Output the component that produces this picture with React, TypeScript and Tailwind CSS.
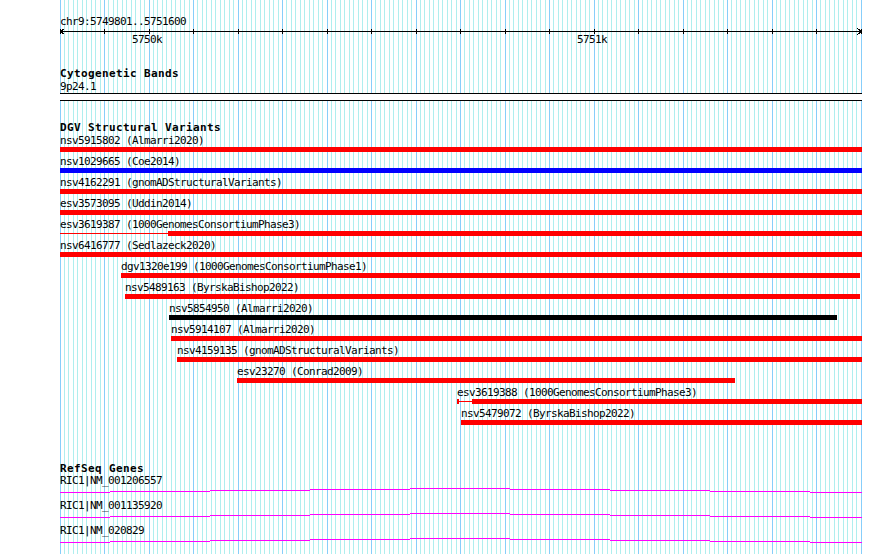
type Variant = {
  label: string;
  x: number;
  end: number;
  color: string;
  thick?: number;
  tick?: boolean;
};

const variants: Variant[] = [
  { label: "nsv5915802 (Almarri2020)", x: 60, end: 862, color: "#ff0000" },
  { label: "nsv1029665 (Coe2014)", x: 60, end: 862, color: "#0000ff" },
  { label: "nsv4162291 (gnomADStructuralVariants)", x: 60, end: 862, color: "#ff0000" },
  { label: "esv3573095 (Uddin2014)", x: 60, end: 862, color: "#ff0000" },
  { label: "esv3619387 (1000GenomesConsortiumPhase3)", x: 60, thick: 168, end: 862, color: "#ff0000" },
  { label: "nsv6416777 (Sedlazeck2020)", x: 60, end: 862, color: "#ff0000" },
  { label: "dgv1320e199 (1000GenomesConsortiumPhase1)", x: 121, end: 860, color: "#ff0000" },
  { label: "nsv5489163 (ByrskaBishop2022)", x: 125, end: 860, color: "#ff0000" },
  { label: "nsv5854950 (Almarri2020)", x: 169, end: 837, color: "#000000" },
  { label: "nsv5914107 (Almarri2020)", x: 171, end: 862, color: "#ff0000" },
  { label: "nsv4159135 (gnomADStructuralVariants)", x: 177, end: 862, color: "#ff0000" },
  { label: "esv23270 (Conrad2009)", x: 237, end: 735, color: "#ff0000" },
  { label: "esv3619388 (1000GenomesConsortiumPhase3)", x: 457, thick: 472, end: 862, color: "#ff0000", tick: true },
  { label: "nsv5479072 (ByrskaBishop2022)", x: 461, end: 862, color: "#ff0000" },
];

const genes = ["RIC1|NM_001206557", "RIC1|NM_001135920", "RIC1|NM_020829"];

// intron "hat" drawn as 1px steps, offsets relative to x=60
const hatSteps = [
  { x: 0, w: 50, y: 5 },
  { x: 50, w: 100, y: 4 },
  { x: 150, w: 100, y: 3 },
  { x: 250, w: 100, y: 2 },
  { x: 350, w: 100, y: 1 },
  { x: 450, w: 100, y: 2 },
  { x: 550, w: 100, y: 3 },
  { x: 650, w: 100, y: 4 },
  { x: 750, w: 52, y: 5 },
];

const gridLines = Array.from({ length: 181 }, (_, i) => ({
  x: Math.floor(60 + i * 4.45),
  major: i % 10 === 0,
}));

const mono = "font-['DejaVu_Sans_Mono',monospace] text-[11px] tracking-[-0.62px] leading-[13px] text-black whitespace-nowrap";
const bold = "font-['DejaVu_Sans_Mono',monospace] text-[11px] font-bold tracking-[0.38px] text-black whitespace-nowrap";

function Grid() {
  return (
    <svg className="absolute inset-0" width={890} height={554} shapeRendering="crispEdges">
      {gridLines
        .filter((g) => !g.major)
        .map((g) => (
          <rect key={g.x} x={g.x} y={0} width={1} height={554} fill="#afeeee" />
        ))}
      {gridLines
        .filter((g) => g.major)
        .map((g) => (
          <rect key={g.x} x={g.x} y={0} width={1} height={554} fill="#87cefa" />
        ))}
    </svg>
  );
}

function Ruler() {
  const ticks = gridLines.filter((g) => g.major);
  return (
    <div className="relative h-[20px]">
      <svg className="absolute inset-0" width={890} height={20} shapeRendering="crispEdges">
        <rect x={60} y={3} width={802} height={1} fill="#000" />
        {ticks.map((t) => (
          <rect key={t.x} x={t.x} y={1} width={1} height={5} fill="#000" />
        ))}
        <path d="M64.5 0.5 L60.5 3.5 L64.5 6.5" stroke="#000" fill="none" />
        <path d="M857.5 0.5 L861.5 3.5 L857.5 6.5" stroke="#000" fill="none" />
      </svg>
      <div className={`absolute top-[5px] left-[132px] ${mono}`}>5750k</div>
      <div className={`absolute top-[5px] left-[577px] ${mono}`}>5751k</div>
    </div>
  );
}

function VariantRow({ v }: { v: Variant }) {
  const thinEnd = v.thick ?? v.x;
  return (
    <div className="h-[21px]">
      <div className={mono} style={{ marginLeft: v.x }}>
        {v.label}
      </div>
      <div className="flex h-[5px] items-center" style={{ marginLeft: v.x }}>
        {thinEnd > v.x ? (
          <div className="flex h-[5px] items-center" style={{ width: thinEnd - v.x }}>
            {v.tick ? <div className="h-[5px] w-[2px] shrink-0" style={{ backgroundColor: v.color }} /> : null}
            <div className="h-px flex-1" style={{ backgroundColor: v.color }} />
          </div>
        ) : null}
        <div className="h-[5px]" style={{ width: v.end - thinEnd, backgroundColor: v.color }} />
      </div>
    </div>
  );
}

function GeneRow({ name }: { name: string }) {
  return (
    <div className="h-[25px]">
      <div className={`ml-[60px] ${mono}`}>{name}</div>
      <svg className="ml-[60px] block" width={802} height={12} shapeRendering="crispEdges">
        {hatSteps.map((s) => (
          <rect key={s.x} x={s.x} y={s.y} width={s.w} height={1} fill="#ff00ff" />
        ))}
      </svg>
    </div>
  );
}

export default function App() {
  return (
    <div className="relative h-[554px] w-[890px] overflow-hidden bg-white">
      <Grid />
      <div className="relative">
        <div className={`h-[28px] pl-[60px] pt-[15px] ${mono}`}>chr9:5749801..5751600</div>
        <Ruler />

        <div className={`mt-[19px] pl-[60px] leading-[13px] ${bold}`}>Cytogenetic Bands</div>
        <div className={`pl-[60px] ${mono}`}>9p24.1</div>
        <div className="ml-[60px] h-[8px] w-[802px] border-y border-black bg-white" />

        <div className={`mt-[20px] pl-[60px] leading-[13px] ${bold}`}>DGV Structural Variants</div>
        {variants.map((v) => (
          <VariantRow key={v.label} v={v} />
        ))}

        <div className={`mt-[35px] pl-[60px] leading-[11px] ${bold}`}>RefSeq Genes</div>
        {genes.map((g) => (
          <GeneRow key={g} name={g} />
        ))}
      </div>
    </div>
  );
}
